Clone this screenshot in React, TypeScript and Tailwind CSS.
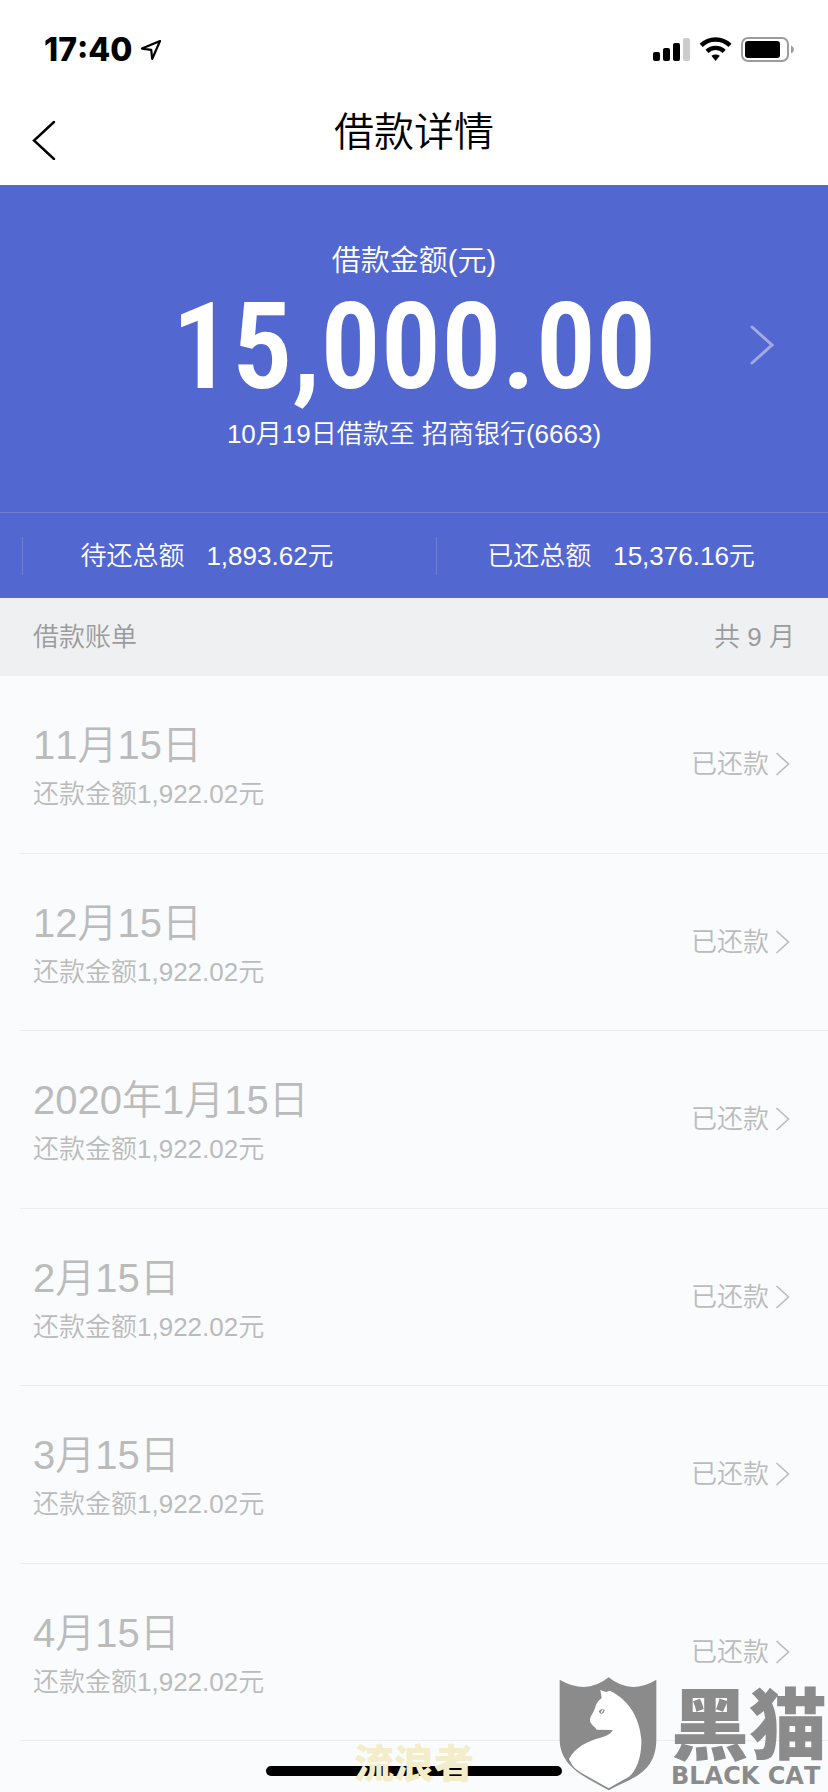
const sans = "font-['Liberation_Sans','Noto_Sans_CJK_SC',sans-serif]";

const bills = [
  { date: '11月15日', amount: '1,922.02' },
  { date: '12月15日', amount: '1,922.02' },
  { date: '2020年1月15日', amount: '1,922.02' },
  { date: '2月15日', amount: '1,922.02' },
  { date: '3月15日', amount: '1,922.02' },
  { date: '4月15日', amount: '1,922.02' },
];

function StatusBar() {
  return (
    <div className="flex h-[100px] items-center justify-between pl-11 pr-[33px]">
      <div className="flex items-center gap-2">
        <span className="font-['Inter',sans-serif] text-[32px] font-extrabold leading-10">17:40</span>
        <svg width="22" height="22" viewBox="0 0 22 22" aria-hidden="true">
          <path d="M20 2 2 9.6 11.2 10.8 12.2 20Z" fill="none" stroke="#000" strokeWidth="2.2" strokeLinejoin="round" />
        </svg>
      </div>
      <svg width="142" height="26" viewBox="0 0 142 26" aria-hidden="true">
        <rect x="0" y="15" width="7" height="9" rx="2" />
        <rect x="10" y="11" width="7" height="13" rx="2" />
        <rect x="20" y="6" width="7" height="18" rx="2" />
        <rect x="30" y="1" width="7" height="23" rx="2" fill="#ccc" />
        <g fill="none" stroke="#000" strokeWidth="4.4">
          <path d="M48.2 8.4A20.5 20.5 0 0 1 77 8.4" />
          <path d="M54 14.3A12.4 12.4 0 0 1 71.2 14.3" />
        </g>
        <path d="M58.4 18.8Q62.6 16 66.8 18.8L62.6 24Z" />
        <rect x="89" y="1" width="46" height="23" rx="6" fill="none" stroke="#9c9c9c" strokeWidth="2" />
        <rect x="92" y="4" width="35" height="17" rx="3" />
        <path d="M138 8.5Q141 10 141 12.5T138 16.5Z" fill="#9c9c9c" />
      </svg>
    </div>
  );
}

function Total({ label, value }: { label: string; value: string }) {
  return (
    <div className="flex flex-1 pl-[22px] pr-[23px]">
      <div className="flex h-[38px] flex-1 items-center justify-center gap-[22px] border-l border-[#717fd6]">
        <span>{label}</span>
        <span>{value}</span>
      </div>
    </div>
  );
}

function BlackCat() {
  return (
    <div className="pointer-events-none absolute bottom-0 right-0 flex items-start text-[#8b8b8b]" aria-hidden="true">
      <svg width="100" height="116" viewBox="0 0 300 348">
        <path d="M5 11Q86 58 152 4Q218 58 295 11V190C295 300 205 310 152 343C99 310 5 280 5 190Z" fill="currentColor" />
        <path
          d="M127 42 144 48 155 44C216 72 245 130 250 190C252 240 235 285 213 302L152 337L72 292C48 278 40 265 33 249C50 215 90 195 125 186C150 179 160 172 164 162L116 161C112 152 96 146 96 133C96 122 108 108 112 94C115 80 123 73 131 66Z"
          fill="#fff"
        />
        <path d="M122 107Q126 97 140 101Q138 114 128 113Z" fill="currentColor" />
        <path d="M133 101 136 104 130 112 128 108Z" fill="#fff" />
      </svg>
      <div className="flex w-[170px] flex-col pl-[13px] pt-1">
        <span className="font-['Noto_Sans_CJK_SC',sans-serif] text-[78px] font-black leading-[80px] whitespace-nowrap">黑猫</span>
        <span className="font-['DejaVu_Sans',sans-serif] text-[24px] font-bold leading-8 whitespace-nowrap">BLACK CAT</span>
      </div>
    </div>
  );
}

export default function App() {
  return (
    <div className={`relative flex min-h-screen flex-col bg-[#fafbfd] font-[350] [font-kerning:none] ${sans}`}>
      <header className="h-[185px] bg-white text-black">
        <StatusBar />
        <div className="grid grid-cols-[80px_1fr_80px] items-center">
          <button type="button" aria-label="返回" className="flex h-16 items-end pl-8 pb-1">
            <svg width="24" height="40" viewBox="0 0 24 40" fill="none" stroke="#000" strokeWidth="2.4" strokeLinecap="round" aria-hidden="true">
              <path d="M22 2 2 20.500 22 39" />
            </svg>
          </button>
          <h1 className="text-center text-[40px] leading-[60px]">借款详情</h1>
        </div>
      </header>

      <section className="bg-[#5268d0] text-white">
        <div className="relative flex h-[327px] flex-col items-center pt-[54px]">
          <p className="text-[29px] leading-[44px]">借款金额(元)</p>
          <p className="pt-[2px] font-['Roboto_Condensed','Roboto',sans-serif] text-[120px] font-semibold leading-[124px]">15,000.00</p>
          <p className="text-[26px] leading-[50px]">10月19日借款至 招商银行(6663)</p>
          <button type="button" aria-label="借款信息" className="absolute right-[53px] top-[139px]">
            <svg width="26" height="42" viewBox="0 0 26 42" fill="none" stroke="#a0aae4" strokeWidth="3" strokeLinecap="round" aria-hidden="true">
              <path d="M3 3 23 21 3 39" />
            </svg>
          </button>
        </div>
        <div className="flex h-[86px] items-center border-t border-[#717fd6] text-[26px] leading-10">
          <Total label="待还总额" value="1,893.62元" />
          <Total label="已还总额" value="15,376.16元" />
        </div>
      </section>

      <div className="flex h-[78px] items-center justify-between bg-[#eff0f2] pl-[33px] pr-[33px] text-[26px] text-[#9b9b9b]">
        <h2>借款账单</h2>
        <span>共 9 月</span>
      </div>

      <main className="flex flex-1 flex-col pb-[51px]">
        <ul className="grid flex-1 auto-rows-fr pl-5 text-[#bbb]">
          {bills.map((bill) => (
            <li key={bill.date} className="flex border-b border-[#ebecee]">
              <button type="button" className="flex flex-1 items-center justify-between pl-[13px] pr-[38px] text-left">
                <span className="flex flex-col gap-[2px] pt-1">
                  <span className="text-[40px] leading-[54px]">{bill.date}</span>
                  <span className="text-[26px] leading-10">还款金额{bill.amount}元</span>
                </span>
                <span className="flex items-center gap-[6px] text-[26px] leading-10">
                  已还款
                  <svg width="15" height="26" viewBox="0 0 15 26" fill="none" stroke="#bbb" strokeWidth="1.6" aria-hidden="true">
                    <path d="M1.500 2 13.500 13 1.500 24" />
                  </svg>
                </span>
              </button>
            </li>
          ))}
        </ul>
      </main>

      <div className="absolute bottom-4 left-1/2 h-[10px] w-[296px] -translate-x-1/2 rounded-full bg-black" />
      <p className="absolute bottom-[6px] left-1/2 -translate-x-1/2 font-['Noto_Sans_CJK_SC',sans-serif] text-[40px] font-black leading-[50px] whitespace-nowrap text-[#f3edca]">
        流浪者
      </p>
      <BlackCat />
    </div>
  );
}
